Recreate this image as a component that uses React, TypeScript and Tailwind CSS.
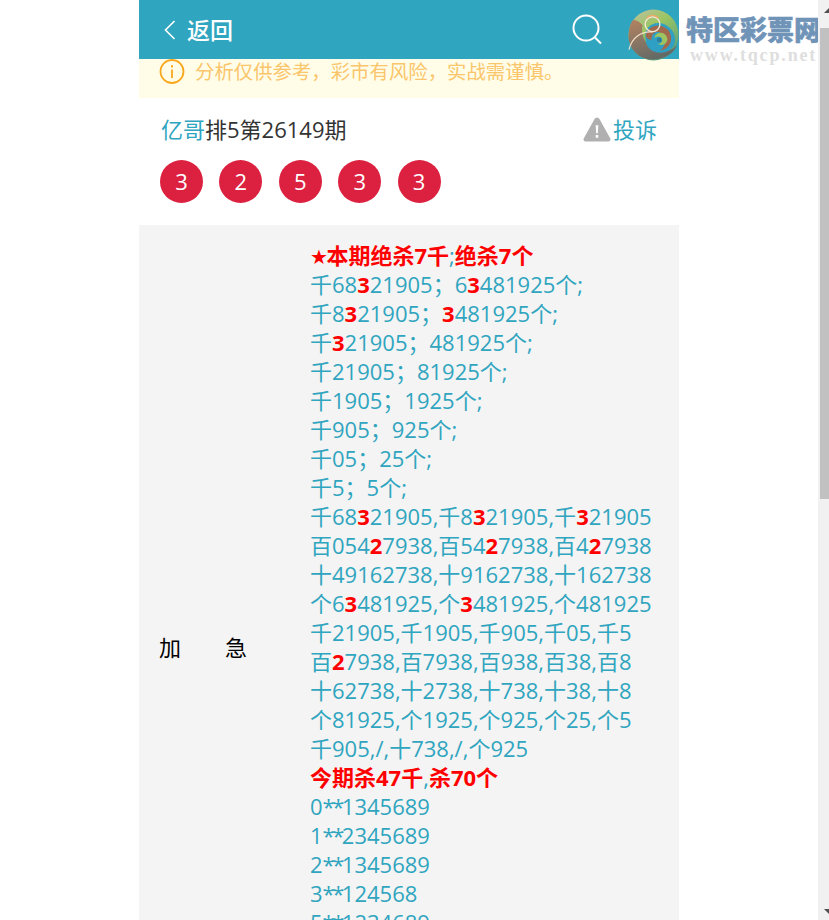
const F = "font-['Open_Sans','Noto_Sans_CJK_SC',sans-serif]";

function R({ children }: { children: React.ReactNode }) {
  return <b className="font-bold text-[#ff0000]">{children}</b>;
}

function S() {
  return <span className="tracking-[-2.5px]">**</span>;
}

const lines: React.ReactNode[] = [
  <><R><span className="font-['DejaVu_Sans',sans-serif] text-[20px] leading-[0] tracking-[-1.5px]">★</span>本期绝杀7千</R>;<R>绝杀7个</R></>,
  <>千68<R>3</R>21905；6<R>3</R>481925个;</>,
  <>千8<R>3</R>21905；<R>3</R>481925个;</>,
  <>千<R>3</R>21905；481925个;</>,
  <>千21905；81925个;</>,
  <>千1905；1925个;</>,
  <>千905；925个;</>,
  <>千05；25个;</>,
  <>千5；5个;</>,
  <>千68<R>3</R>21905,千8<R>3</R>21905,千<R>3</R>21905</>,
  <>百054<R>2</R>7938,百54<R>2</R>7938,百4<R>2</R>7938</>,
  <>十49162738,十9162738,十162738</>,
  <>个6<R>3</R>481925,个<R>3</R>481925,个481925</>,
  <>千21905,千1905,千905,千05,千5</>,
  <>百<R>2</R>7938,百7938,百938,百38,百8</>,
  <>十62738,十2738,十738,十38,十8</>,
  <>个81925,个1925,个925,个25,个5</>,
  <>千905,/,十738,/,个925</>,
  <><R>今期杀47千</R>,<R>杀70个</R></>,
  <>0<S />1345689</>,
  <>1<S />2345689</>,
  <>2<S />1345689</>,
  <>3<S />124568</>,
  <>5<S />1234689</>,
];

export default function App() {
  return (
    <div className={`${F} relative h-[920px] w-[829px] overflow-hidden bg-white pr-[11px]`}>
      <div className="mx-auto flex h-[920px] w-[540px] flex-col">
        <header className="flex h-[59px] shrink-0 items-center bg-[#30a5bf] pl-[25px] text-white">
          <svg width="12" height="20" viewBox="0 0 12 20" fill="none" stroke="white" strokeWidth="1.6"><path d="M10.5 1 L1.5 10 L10.5 19" /></svg>
          <span className="ml-[11px] text-[23px] font-medium leading-[30px]">返回</span>
          <svg className="ml-auto mr-[75px]" width="32" height="32" viewBox="0 0 32 32" fill="none" stroke="white" strokeWidth="2"><circle cx="14" cy="14" r="12.5" /><path d="M23 23.5 L29 29.5" /></svg>
        </header>
        <div className="flex h-[39px] shrink-0 items-start bg-[#fffde8] pl-[20px] text-[#fbc56b]">
          <svg width="26" height="26" viewBox="0 0 26 26" fill="none" stroke="#f9a81e" strokeWidth="1.8"><circle cx="13" cy="12.5" r="11.5" /><path d="M13 10.5 V19 M13 6 V8.5" /></svg>
          <span className="ml-[10px] text-[19.4px] leading-[26px]">分析仅供参考，彩市有风险，实战需谨慎。</span>
        </div>
        <div className="flex h-[127px] shrink-0 flex-col bg-white px-[20px] pt-[16px]">
          <div className="flex items-center justify-between text-[22px] leading-[30px]">
            <div className="pl-[2px] text-[#333333]"><span className="text-[#30a5bf]">亿哥</span>排5第26149期</div>
            <div className="flex items-center pr-[2px] text-[#30a5bf]">
              <svg width="28" height="25" viewBox="0 0 27 24" className="mr-[2px]"><path fillRule="evenodd" fill="#b0b0b0" d="M13.5 0.5 Q15 0.5 16 2.2 L26.2 20.5 Q27.3 23.3 24.5 23.5 H2.5 Q-0.3 23.3 0.8 20.5 L11 2.2 Q12 0.5 13.5 0.5 Z M12.2 8 L12.7 15.5 H14.3 L14.8 8 Z M12.3 17.3 V20 H14.7 V17.3 Z" /></svg>
              投诉
            </div>
          </div>
          <div className="mt-[16px] flex gap-[16.4px] pl-[1px]">
            {["3", "2", "5", "3", "3"].map((n, i) => (
              <div key={i} className="flex h-[43px] w-[43px] items-center justify-center rounded-full bg-[#dc203f] text-[22px] text-white">{n}</div>
            ))}
          </div>
        </div>
        <div className="flex min-h-0 flex-1 items-start bg-[#f4f4f4]">
          <div className="flex h-[844px] w-[171px] shrink-0 items-center gap-[44px] pl-[20px] text-[22px] text-black">
            <span>加</span><span>急</span>
          </div>
          <div className="pt-[16px] text-[22px] leading-[29px] text-[#30a5bf]">
            {lines.map((l, i) => <div key={i} className="whitespace-nowrap">{l}</div>)}
          </div>
        </div>
      </div>

      <svg className="absolute left-[628px] top-[9px]" width="51" height="52" viewBox="0 0 52 52">
        <defs>
          <linearGradient id="lg" x1="0.2" y1="0" x2="0.8" y2="1">
            <stop offset="0" stopColor="#b9c29a" /><stop offset="0.35" stopColor="#9cc562" /><stop offset="1" stopColor="#4d9a85" />
          </linearGradient>
          <linearGradient id="br" x1="0" y1="0" x2="0.4" y2="1">
            <stop offset="0" stopColor="#b5835f" /><stop offset="1" stopColor="#666a66" />
          </linearGradient>
        </defs>
        <ellipse cx="26" cy="26" rx="25.5" ry="26" fill="url(#lg)" />
        <path d="M5 11 C1 16 0 26 1 32 C4 46 18 52 27 51 C38 50 47 45 50 36 C44 44 30 46 22 38 C15 31 13 22 15 16 C12 13 8 10 5 11 Z" fill="url(#br)" />
        <path d="M18 30 C16 18 26 11 37 15 C46 19 50 28 47 36 C42 46 28 46 22 40 C19 37 18 34 18 30 Z" fill="#2f9fc4" />
        <path d="M18 27 C20 15 34 13 41 21 C47 29 44 40 33 42 C39 36 40 29 35 25 C30 21 24 23 24 31 C21 31 19 29 18 27 Z" fill="#a16a4d" />
        <path d="M27 29 C28 22 38 22 40 29 C41 35 34 38 30 35 C34 35 36 32 34 29 C32 27 29 28 27 29 Z" fill="#9cc562" />
        <circle cx="32" cy="31" r="2.5" fill="#2a7f9e" />
        <circle cx="25" cy="15" r="7.5" fill="none" stroke="#f3e9dc" strokeWidth="1.4" />
        <path d="M25 23 C14 22 4 28 1 41" fill="none" stroke="#f3e0cc" strokeWidth="1.2" />
        <path d="M19 9 C22 5 28 5 31 9" fill="none" stroke="#f0a868" strokeWidth="1.2" />
      </svg>
      <div className="absolute left-[686px] top-[15px] font-['Liberation_Sans','Noto_Sans_CJK_SC',sans-serif] text-[27px] font-black leading-[32px] text-[#7093b8] [-webkit-text-stroke:0.5px_#7093b8]">特区彩票网</div>
      <div className="absolute left-[690px] top-[46px] font-['Liberation_Serif',serif] text-[18px] font-bold leading-[18px] tracking-[1.85px] text-[#dedede]">www.tqcp.net</div>

      <div className="absolute left-[818px] top-0 h-[920px] w-[11px] bg-[#f1f1f1]">
        <svg className="absolute left-[6px] top-[8px]" width="5" height="5" viewBox="0 0 5 5"><path d="M0 5 L5 0 V5 Z" fill="#505050" /></svg>
        <div className="absolute left-[2px] top-[28px] h-[471px] w-[9px] bg-[#c1c1c1]" />
        <svg className="absolute left-[6px] top-[909px]" width="5" height="5" viewBox="0 0 5 5"><path d="M0 0 H5 V5 Z" fill="#505050" /></svg>
      </div>
    </div>
  );
}
